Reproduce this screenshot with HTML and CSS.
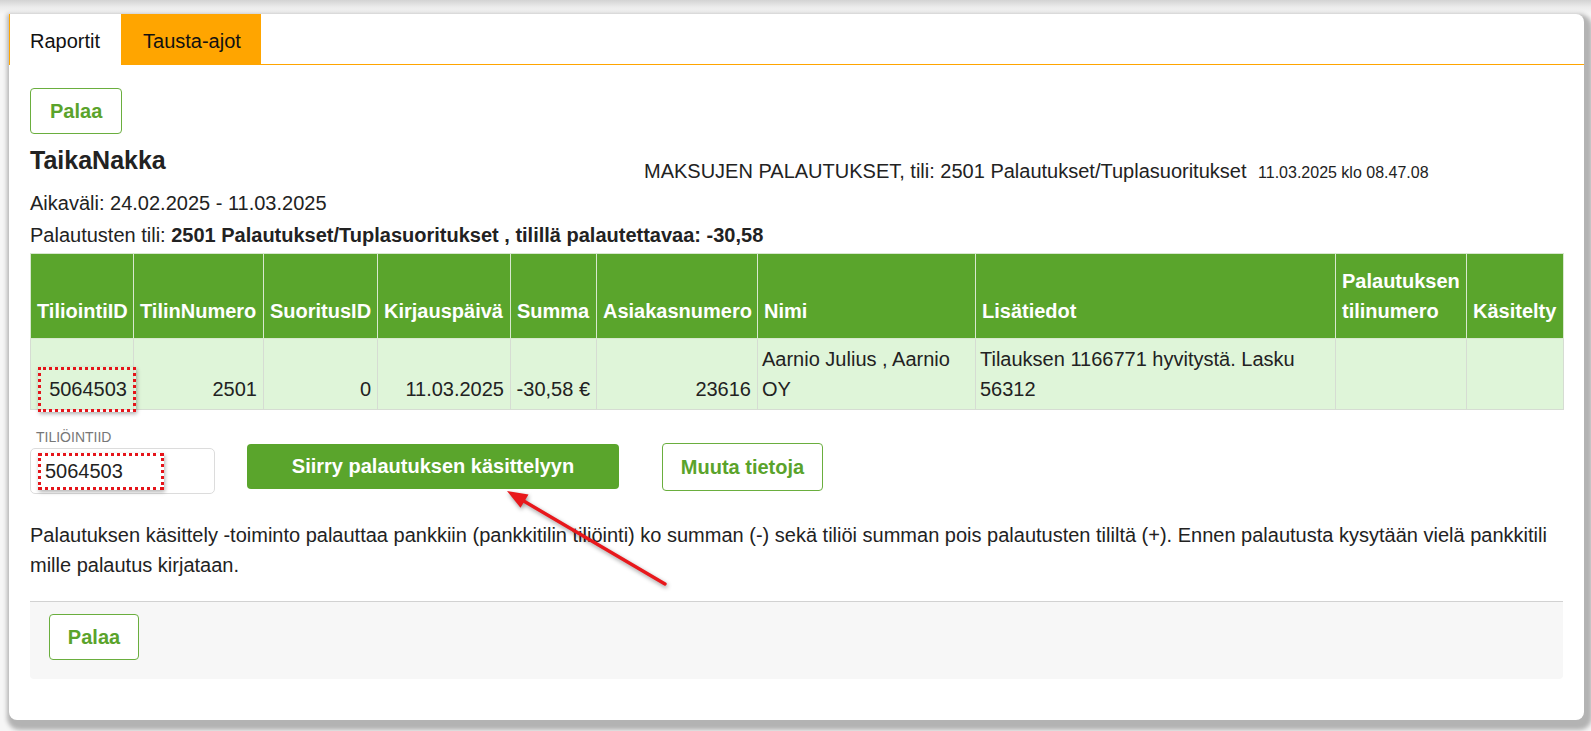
FILE: index.html
```html
<!DOCTYPE html>
<html lang="fi">
<head>
<meta charset="utf-8">
<title>Maksujen palautukset</title>
<link rel="stylesheet" href="styles.css">
</head>
<body>
<div class="card">
  <div class="tabs">
    <div class="tab tab-active">Raportit</div>
    <div class="tab tab-orange">Tausta-ajot</div>
    <div class="tab-fill"></div>
  </div>
  <div class="content">
    <button class="btn btn-outline">Palaa</button>
    <div class="head-row">
      <div class="company">TaikaNakka</div>
      <div class="report-title">MAKSUJEN PALAUTUKSET, tili: 2501 Palautukset/Tuplasuoritukset <span class="stamp">11.03.2025 klo 08.47.08</span></div>
    </div>
    <div class="info-line">Aikaväli: 24.02.2025 - 11.03.2025</div>
    <div class="info-line">Palautusten tili: <b>2501 Palautukset/Tuplasuoritukset , tilillä palautettavaa: -30,58</b></div>
    <table class="grid">
      <colgroup>
        <col style="width:103px"><col style="width:130px"><col style="width:114px"><col style="width:133px"><col style="width:86px"><col style="width:161px"><col style="width:218px"><col style="width:360px"><col style="width:131px"><col style="width:97px">
      </colgroup>
      <thead>
        <tr>
          <th>TiliointiID</th><th>TilinNumero</th><th>SuoritusID</th><th>Kirjauspäivä</th><th>Summa</th><th>Asiakasnumero</th><th>Nimi</th><th>Lisätiedot</th><th>Palautuksen tilinumero</th><th>Käsitelty</th>
        </tr>
      </thead>
      <tbody>
        <tr>
          <td class="num mark-cell">5064503<span class="mark mark-table"></span></td>
          <td class="num">2501</td>
          <td class="num">0</td>
          <td class="num">11.03.2025</td>
          <td class="num">-30,58 €</td>
          <td class="num">23616</td>
          <td class="txt">Aarnio Julius , Aarnio OY</td>
          <td class="txt">Tilauksen 1166771 hyvitystä. Lasku 56312</td>
          <td></td>
          <td></td>
        </tr>
      </tbody>
    </table>
    <div class="form-row">
      <div class="field">
        <label class="field-label">TILIÖINTIID</label>
        <div class="input-wrap">
          <div class="input">5064503</div>
          <span class="mark mark-input"></span>
        </div>
      </div>
      <button class="btn btn-primary">Siirry palautuksen käsittelyyn</button>
      <button class="btn btn-outline btn-muuta">Muuta tietoja</button>
    </div>
    <p class="note">Palautuksen käsittely -toiminto palauttaa pankkiin (pankkitilin tiliöinti) ko summan (-) sekä tiliöi summan pois palautusten tililtä (+). Ennen palautusta kysytään vielä pankkitili mille palautus kirjataan.</p>
    <div class="footer">
      <button class="btn btn-outline">Palaa</button>
    </div>
  </div>
  <svg class="arrow" width="190" height="115" viewBox="0 0 190 115">
    <line x1="175" y1="104" x2="32" y2="20" stroke="#e8181c" stroke-width="3.4" stroke-linecap="round"/>
    <polygon points="17,11 38.5,14.5 30.5,27.8" fill="#e8181c"/>
  </svg>
</div>
</body>
</html>
```

FILE: styles.css
```css
html, body {
  margin: 0;
  padding: 0;
}
body {
  width: 1591px;
  height: 731px;
  box-sizing: border-box;
  padding: 14px 7px 11px 9px;
  background: linear-gradient(to bottom, #d3d3d3 0, #ebebeb 7px, #f6f6f6 14px, #f6f6f6 100%);
  font-family: "Liberation Sans", Arial, sans-serif;
  color: #222;
  overflow: hidden;
}
.card {
  position: relative;
  height: 706px;
  background: #fff;
  border-radius: 0 8px 8px 8px;
  box-shadow: 3px 5px 4px 5px #b3b3b3;
  overflow: hidden;
}
.tabs {
  display: flex;
  height: 51px;
}
.tab {
  box-sizing: border-box;
  height: 51px;
  display: flex;
  align-items: center;
  padding: 3px 21px 0 21px;
  font-size: 20px;
  color: #111;
  white-space: nowrap;
}
.tab-active {
  background: #fff;
  border-left: 1px solid #ffa500;
  padding-left: 20px;
}
.tab-orange {
  background: #ffa500;
  width: 140px;
  padding-left: 22px;
  padding-right: 18px;
}
.tab-fill {
  flex: 1;
  height: 50px;
  border-bottom: 1px solid #ffa500;
}
.content {
  padding: 23px 21px 41px 21px;
}
.btn {
  font-family: "Liberation Sans", Arial, sans-serif;
  font-weight: bold;
  font-size: 20px;
  cursor: pointer;
}
.btn-outline {
  display: block;
  box-sizing: border-box;
  height: 46px;
  padding: 0 19px;
  line-height: 44px;
  background: #fff;
  color: #5aa32b;
  border: 1px solid #6aae3e;
  border-radius: 4px;
}
.head-row {
  display: grid;
  grid-template-columns: 614px auto;
  margin-top: 11px;
  height: 41px;
}
.company {
  font-size: 25px;
  font-weight: bold;
  line-height: 30px;
  color: #222;
}
.report-title {
  margin-top: 11px;
  font-size: 20px;
  line-height: 30px;
  color: #222;
}
.stamp {
  font-size: 16px;
  margin-left: 6px;
}
.info-line {
  margin-top: 2px;
  font-size: 20px;
  line-height: 30px;
}
.grid {
  margin-top: 3px;
  width: 1533px;
  table-layout: fixed;
  border-collapse: collapse;
  font-size: 20px;
  line-height: 30px;
  border: 1px solid #dadada;
}
.grid th {
  background: #5aa52c;
  color: #fff;
  font-weight: bold;
  text-align: left;
  vertical-align: bottom;
  padding: 12px 4px 12px 6px;
  border: 1px solid #d8e8cf;
  height: 60px;
}
.grid td {
  background: #dff5d9;
  color: #222;
  vertical-align: bottom;
  padding: 5px 6px 5px 4px;
  border: 1px solid #d6dcd3;
  height: 60px;
}
.grid td.num {
  text-align: right;
}
.grid td.txt {
  text-align: left;
  vertical-align: top;
}
.mark-cell {
  position: relative;
}
.mark {
  position: absolute;
  box-sizing: border-box;
  border: 3px dotted #e5141a;
  box-shadow: 1px 2px 4px rgba(0, 0, 0, 0.3);
  pointer-events: none;
}
.mark-table {
  left: 7px;
  top: 28px;
  width: 98px;
  height: 45px;
}
.form-row {
  display: flex;
  align-items: flex-end;
  margin-top: 19px;
}
.field {
  width: 185px;
  margin-right: 32px;
}
.field-label {
  display: block;
  font-size: 14px;
  line-height: 17px;
  color: #777;
  padding-left: 6px;
}
.input-wrap {
  position: relative;
  margin-top: 2px;
}
.input {
  box-sizing: border-box;
  height: 46px;
  border: 1px solid #dcdcdc;
  border-radius: 5px;
  padding-left: 14px;
  font-size: 20px;
  line-height: 44px;
  color: #222;
}
.mark-input {
  left: 8px;
  top: 5px;
  width: 126px;
  height: 37px;
}
.btn-primary {
  box-sizing: border-box;
  width: 372px;
  height: 45px;
  line-height: 45px;
  padding: 0;
  margin-bottom: 5px;
  background: #5aa52c;
  color: #fff;
  border: none;
  border-radius: 4px;
}
.btn-muuta {
  width: 161px;
  height: 48px;
  line-height: 46px;
  padding: 0;
  margin-left: 43px;
  margin-bottom: 3px;
}
.note {
  margin: 26px 0 0 0;
  font-size: 20px;
  line-height: 30px;
  color: #222;
}
.footer {
  margin-top: 21px;
  background: #f7f7f7;
  border-top: 1px solid #d2d2d2;
  border-radius: 0 0 4px 4px;
  padding: 12px 19px 19px 19px;
}
.footer .btn-outline {
  width: 90px;
  padding: 0;
}
.arrow {
  position: absolute;
  left: 481px;
  top: 466px;
  filter: drop-shadow(1px 2px 2px rgba(0, 0, 0, 0.4));
  pointer-events: none;
}
```
